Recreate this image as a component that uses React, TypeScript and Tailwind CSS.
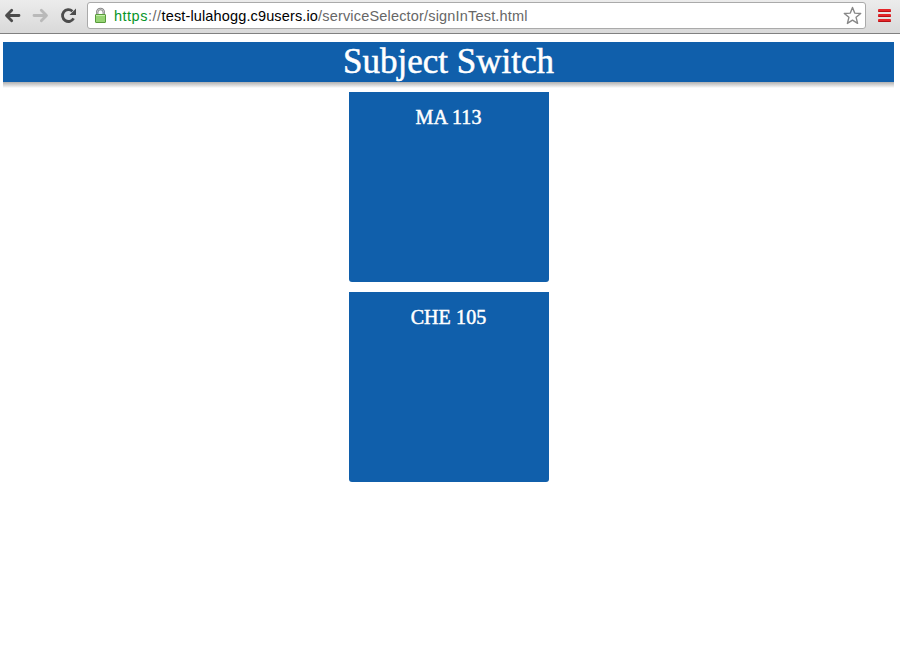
const subjects = ["MA 113", "CHE 105"];

function Toolbar() {
  return (
    <div className="flex h-[34px] items-start border-b border-[#808080] bg-linear-to-b from-[#ececec] to-[#d9d9d9] font-['Liberation_Sans',Arial,sans-serif]">
      <svg width="87" height="33" viewBox="0 0 87 33" fill="none" className="shrink-0">
        <path d="M19 15.5H7.5M11.7 10.2L6.5 15.5L11.7 20.8" stroke="#4c4c4c" strokeWidth="2.8" strokeLinecap="round" strokeLinejoin="round" />
        <path d="M34 15.5H45.5M41.3 10.2L46.5 15.5L41.3 20.8" stroke="#b9b9b9" strokeWidth="2.8" strokeLinecap="round" strokeLinejoin="round" />
        <path d="M73.6 18.4A5.9 5.9 0 1 1 72.4 11.2" stroke="#4c4c4c" strokeWidth="2.8" />
        <path d="M76 8.5V15H69.5Z" fill="#4c4c4c" />
      </svg>
      <div className="mt-[2px] flex h-[27px] w-[779px] items-start rounded-[3px] border border-[#aaa] bg-white">
        <svg width="26" height="25" viewBox="88 3 26 25" fill="none" className="shrink-0">
          <path d="M97.2 15V12.3A3.3 3.3 0 0 1 103.8 12.3V15" stroke="#858585" strokeWidth="2.4" />
          <path d="M97.2 15V12.3A3.3 3.3 0 0 1 103.8 12.3V15" stroke="#d0d0d0" strokeWidth=".9" />
          <rect x="95.5" y="14.5" width="10" height="8" rx=".5" fill="#96d474" stroke="#589b3b" />
          <path d="M96 15.5H105" stroke="#c5efaa" />
        </svg>
        <div className="flex-1 pt-px whitespace-nowrap text-[14.5px] leading-[25px] tracking-[0.212px] text-[#676767]">
          <span className="tracking-[0.5px] text-[#079528]">https</span>
          <span className="tracking-[0.5px]">://</span>
          <span className="tracking-[0.14px] text-black">test-lulahogg.c9users.io</span>
          <span className="tracking-[0.18px]">/serviceSelector/signInTest.html</span>
        </div>
        <svg width="26" height="25" viewBox="839 3 26 25" fill="none" className="shrink-0">
          <path
            d="M852.5 7.5L854.7 13.1L860.7 13.5L856.1 17.3L857.6 23.4L852.5 20.1L847.4 23.4L848.9 17.3L844.3 13.5L850.3 13.1Z"
            stroke="#888"
            strokeWidth="1.4"
            strokeLinejoin="round"
          />
        </svg>
      </div>
      <div className="mt-[9px] ml-[12px] flex flex-col gap-[2px]">
        <div className="h-[3px] w-[13px] rounded-[1px] border-b border-[#b51015] bg-[#e52529]" />
        <div className="h-[3px] w-[13px] rounded-[1px] border-b border-[#b51015] bg-[#e52529]" />
        <div className="h-[3px] w-[13px] rounded-[1px] border-b border-[#b51015] bg-[#e52529]" />
      </div>
    </div>
  );
}

export default function App() {
  return (
    <div className="h-[670px] w-[900px] overflow-hidden bg-white font-['Liberation_Serif','Times_New_Roman',serif] text-white">
      <Toolbar />
      <main className="mt-[8px] ml-[3px] flex w-[891px] flex-col items-center">
        <h1 className="h-10 w-full bg-[#105fab] text-center text-[35px] leading-[40px] [-webkit-text-stroke:0.5px_white]">Subject Switch</h1>
        <div className="h-[6px] w-full bg-linear-to-b from-[#b0b0b0] to-white" />
        <div className="mt-1 ml-px flex flex-col gap-[10px]">
          {subjects.map((subject) => (
            <section key={subject} className="h-[190px] w-[200px] rounded-b-[3px] bg-[#105fab] pt-[14px] pr-px text-center text-[20px] leading-[23px] tracking-[0.1px] [-webkit-text-stroke:0.5px_white]">
              {subject}
            </section>
          ))}
        </div>
      </main>
    </div>
  );
}
